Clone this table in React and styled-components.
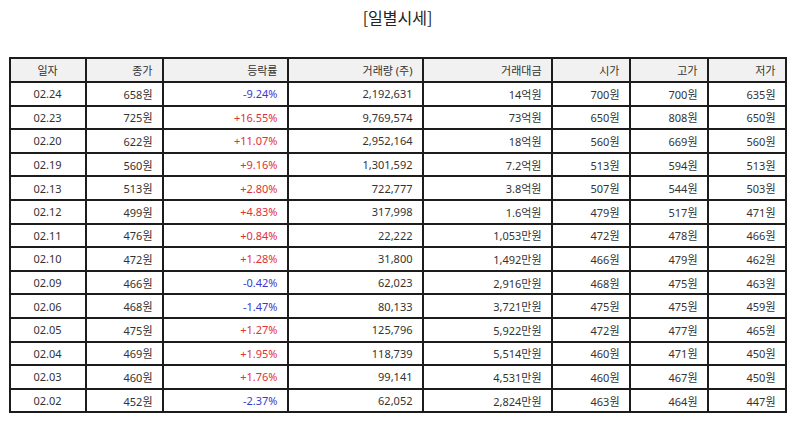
import React from "react";
import styled, { createGlobalStyle } from "styled-components";

const Global = createGlobalStyle`
  html, body { margin: 0; padding: 0; background: #fff; }
  body { font-family: "Noto Sans", "Noto Sans CJK KR", sans-serif; color: #333; }
`;

const Page = styled.div`
  padding: 0 9px 0 10px;
  display: flex;
  flex-direction: column;
  align-items: center;
`;

const Title = styled.h2`
  margin: 6px 0 29px;
  font-size: 16px;
  line-height: 22px;
  font-weight: 400;
  color: #222;
  font-family: "Noto Sans CJK KR", sans-serif;
`;

const Table = styled.table`
  width: 776px;
  border-collapse: collapse;
  table-layout: fixed;
  font-size: 11px;
`;

const HeadRow = styled.tr`
  height: 24px;
  background: #f1f1f1;
`;

const Row = styled.tr`
  height: 23.6px;
`;

const Th = styled.th`
  border: 2px solid #1c1c1c;
  font-weight: 400;
  padding: 0 9px;
  text-align: ${(p) => (p.$center ? "center" : "right")};
  color: #333;
  white-space: nowrap;
`;

const Td = styled.td`
  border: 2px solid #1c1c1c;
  padding: 0 9px;
  text-align: ${(p) => (p.$center ? "center" : "right")};
  color: ${(p) => (p.$tone === "up" ? "#e0303a" : p.$tone === "down" ? "#3a3acf" : "#333")};
  white-space: nowrap;
`;

const widths = [76, 77, 125, 135, 129, 78, 78, 78];
const headers = ["일자", "종가", "등락률", "거래량 (주)", "거래대금", "시가", "고가", "저가"];

const rows = [
  ["02.24", "658원", "-9.24%", "2,192,631", "14억원", "700원", "700원", "635원"],
  ["02.23", "725원", "+16.55%", "9,769,574", "73억원", "650원", "808원", "650원"],
  ["02.20", "622원", "+11.07%", "2,952,164", "18억원", "560원", "669원", "560원"],
  ["02.19", "560원", "+9.16%", "1,301,592", "7.2억원", "513원", "594원", "513원"],
  ["02.13", "513원", "+2.80%", "722,777", "3.8억원", "507원", "544원", "503원"],
  ["02.12", "499원", "+4.83%", "317,998", "1.6억원", "479원", "517원", "471원"],
  ["02.11", "476원", "+0.84%", "22,222", "1,053만원", "472원", "478원", "466원"],
  ["02.10", "472원", "+1.28%", "31,800", "1,492만원", "466원", "479원", "462원"],
  ["02.09", "466원", "-0.42%", "62,023", "2,916만원", "468원", "475원", "463원"],
  ["02.06", "468원", "-1.47%", "80,133", "3,721만원", "475원", "475원", "459원"],
  ["02.05", "475원", "+1.27%", "125,796", "5,922만원", "472원", "477원", "465원"],
  ["02.04", "469원", "+1.95%", "118,739", "5,514만원", "460원", "471원", "450원"],
  ["02.03", "460원", "+1.76%", "99,141", "4,531만원", "460원", "467원", "450원"],
  ["02.02", "452원", "-2.37%", "62,052", "2,824만원", "463원", "464원", "447원"],
];

export default function App() {
  return (
    <>
      <Global />
      <Page>
        <Title>[일별시세]</Title>
        <Table>
          <colgroup>
            {widths.map((w, i) => (
              <col key={i} style={{ width: w }} />
            ))}
          </colgroup>
          <thead>
            <HeadRow>
              {headers.map((h, i) => (
                <Th key={h} $center={i === 0}>
                  {h}
                </Th>
              ))}
            </HeadRow>
          </thead>
          <tbody>
            {rows.map((r) => (
              <Row key={r[0]}>
                {r.map((c, i) => (
                  <Td
                    key={i}
                    $center={i === 0}
                    $tone={i === 2 ? (c.startsWith("-") ? "down" : "up") : undefined}
                  >
                    {c}
                  </Td>
                ))}
              </Row>
            ))}
          </tbody>
        </Table>
      </Page>
    </>
  );
}
